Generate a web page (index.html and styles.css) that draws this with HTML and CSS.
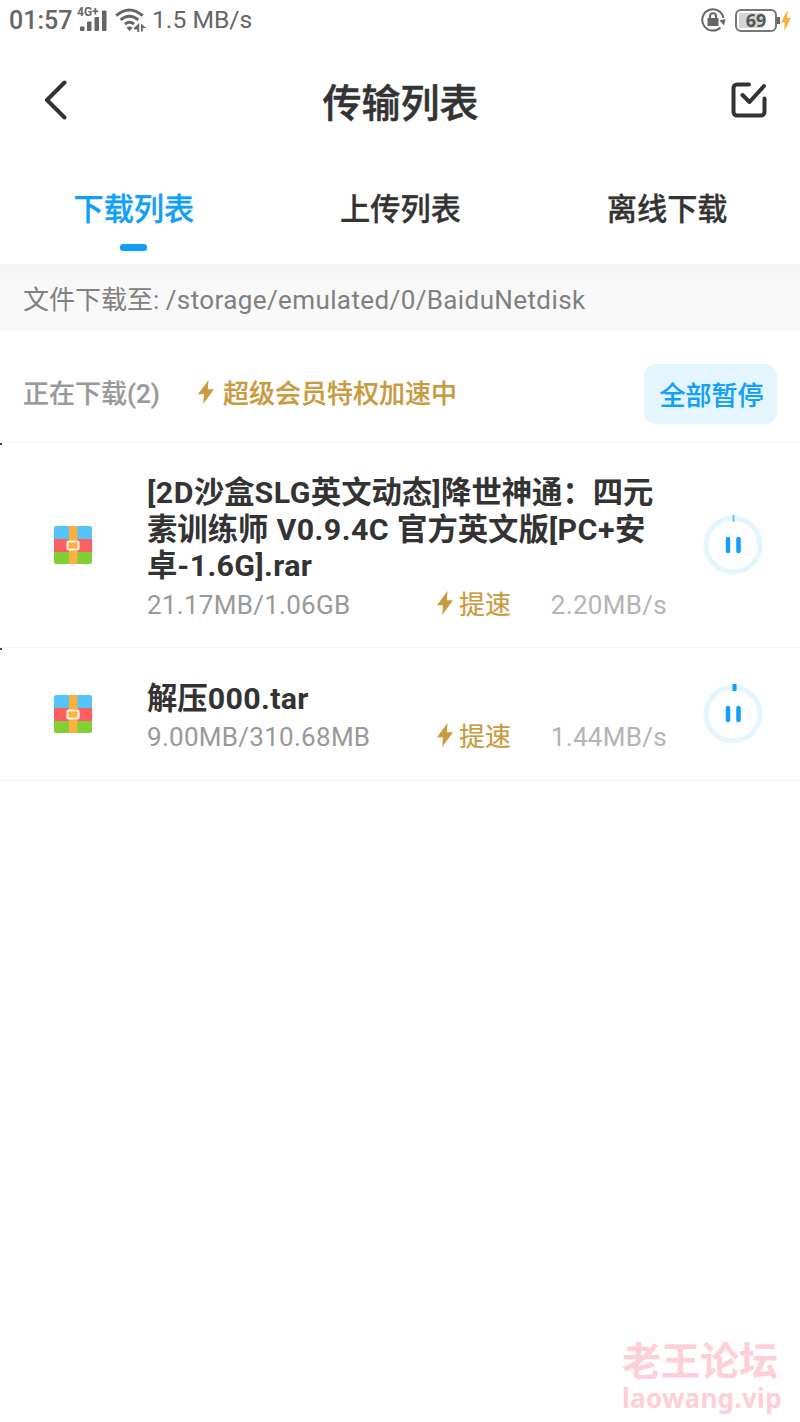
FILE: index.html
```html
<!DOCTYPE html>
<html lang="zh-CN">
<head>
<meta charset="utf-8">
<title>传输列表</title>
<link rel="stylesheet" href="styles.css">
</head>
<body>
<svg class="defs" width="0" height="0" aria-hidden="true">
  <symbol id="bolt" viewBox="0 0 16 24" preserveAspectRatio="none"><path d="M10.500 0 0 14.200h6L5.200 24 16 9.200H9.800z"/></symbol>
  <symbol id="archive" viewBox="0 0 38 38">
    <path fill="#55c5f9" d="M2 0h34a2 2 0 0 1 2 2v11H0V2a2 2 0 0 1 2-2z"/>
    <path fill="#fb5f62" d="M0 13h38v13H0z"/>
    <path fill="#81cf35" d="M0 26h38v10a2 2 0 0 1-2 2H2a2 2 0 0 1-2-2z"/>
    <path fill="#fbb041" d="M15 0h8.500v38H15z"/>
    <rect x="13.500" y="15.500" width="11" height="8" rx="1" fill="#fbb041" stroke="#fff0da" stroke-width="2.200"/>
  </symbol>
</svg>
<div class="screen">
  <header class="status">
    <span class="clock">01:57</span>
    <svg class="signal" width="30" height="28" viewBox="0 -2 30 28">
      <text x="0" y="7.500" class="network">4G+</text>
      <path fill="#666" stroke="#666" stroke-linejoin="round" d="M3.500 19H7v3.500H3.500zM10.500 14H14v8.500h-3.500zM18 9.500h3.500v13H18zM25.500 3H29v19.500h-3.500z"/>
    </svg>
    <svg class="wifi" width="32" height="26" viewBox="0 0 32 26">
      <g fill="none" stroke="#666" stroke-width="3">
        <path d="M1.200 8.700q13-11.400 26.500 0M5.600 12.900q8.800-7.400 17.700 0M10 17.100q4.500-3.600 9 0"/>
      </g>
      <path fill="#666" d="m11.500 20.700q3-2.500 6 0L14.500 24zM24.200 16v9h-1.800v-2.500H19v-1.500zm-1.800 3v2h-1.400zM26 16.500l5 4.500h-3.200v3.500H26z"/>
    </svg>
    <span class="rate">1.5 MB/s</span>
    <svg class="lock" width="26" height="26" viewBox="0 0 26 26">
      <path d="M20.500 20.500A10.700 10.700 0 1 1 23.500 11" fill="none" stroke="#666" stroke-width="2"/>
      <path fill="#666" d="m19.500 13.500 6-1.500L24 18.500zM7.500 11h11v8h-11z"/>
      <path d="M10 11.500V9.200a3 3 0 0 1 6 0v2.300" fill="none" stroke="#666" stroke-width="2"/>
    </svg>
    <span class="battery"><span class="charge">69</span></span>
    <svg class="charging" width="10" height="21"><use href="#bolt"/></svg>
  </header>

  <nav class="titlebar">
    <svg class="back" width="24" height="40" viewBox="0 0 24 40"><path d="M20.500 2.500 3 20l17.500 17.500"/></svg>
    <h1 class="title">传输列表</h1>
    <svg class="select" width="36" height="36" viewBox="0 0 36 36"><path d="M18 2.500H6A3.500 3.500 0 0 0 2.500 6v24A3.500 3.500 0 0 0 6 33.500h24a3.500 3.500 0 0 0 3.500-3.500V16.500M11.500 13l7 7L33 4"/></svg>
  </nav>

  <div class="tabs">
    <div class="tab active">下载列表</div>
    <div class="tab">上传列表</div>
    <div class="tab">离线下载</div>
  </div>

  <div class="path">文件下载至: <span class="folder">/storage/emulated/0/BaiduNetdisk</span></div>

  <div class="section">
    <span class="count">正在下载(2)</span>
    <svg class="bolt" width="16" height="24"><use href="#bolt"/></svg>
    <span class="boost">超级会员特权加速中</span>
    <button class="pause-all">全部暂停</button>
  </div>

  <div class="item first">
    <svg class="file" width="38" height="38"><use href="#archive"/></svg>
    <div class="info">
      <div class="name"><span class="latin">[2D</span>沙盒<span class="latin">SLG</span>英文动态<span class="latin">]</span>降世神通：四元<br>素训练师<span class="latin"> V0.9.4C </span>官方英文版<span class="latin">[PC+</span>安<br>卓<span class="latin">-1.6G].rar</span></div>
      <div class="meta">
        <span class="size">21.17MB/1.06GB</span>
        <svg class="bolt" width="16" height="24"><use href="#bolt"/></svg>
        <span class="faster">提速</span>
        <span class="speed">2.20MB/s</span>
      </div>
    </div>
    <svg class="ring" width="60" height="60" viewBox="0 0 60 60">
      <circle cx="30" cy="30" r="27" fill="none" stroke="#e5f5fe" stroke-width="5"/>
      <path d="M30.500 0v7" stroke="#5abdf8" stroke-width="1.800"/>
      <path d="M25 24v12M35.500 24v12" stroke="#119ffa" stroke-width="4.500" stroke-linecap="round"/>
    </svg>
  </div>

  <div class="item second">
    <svg class="file" width="38" height="38"><use href="#archive"/></svg>
    <div class="info">
      <div class="name">解压<span class="latin">000.tar</span></div>
      <div class="meta">
        <span class="size">9.00MB/310.68MB</span>
        <svg class="bolt" width="16" height="24"><use href="#bolt"/></svg>
        <span class="faster">提速</span>
        <span class="speed">1.44MB/s</span>
      </div>
    </div>
    <svg class="ring" width="60" height="60" viewBox="0 0 60 60">
      <circle cx="30" cy="30" r="27" fill="none" stroke="#e5f5fe" stroke-width="5"/>
      <path d="M31.500 0v7" stroke="#119ffa" stroke-width="4"/>
      <path d="M25 24v12M35.500 24v12" stroke="#119ffa" stroke-width="4.500" stroke-linecap="round"/>
    </svg>
  </div>

  <footer class="watermark">
    <div class="forum">老王论坛</div>
    <div class="site">laowang.vip</div>
  </footer>
</div>
</body>
</html>
```
FILE: styles.css
```css
* { box-sizing: border-box; }
body { margin: 0; background: #fefefe; font-family: Roboto, "Noto Sans CJK SC", sans-serif; color: #333; }
.defs { display: block; }
.screen { display: flex; flex-direction: column; width: 800px; height: 1422px; overflow: hidden; white-space: nowrap; }

.status { display: flex; align-items: center; height: 40px; padding: 0 9px; color: #666; }
.status svg { flex: none; }
.clock { width: 68px; padding-top: 2px; font-size: 25px; font-weight: 500; line-height: 40px; }
.network { font: bold 12px Roboto, sans-serif; fill: #666; }
.wifi { margin-left: 8px; }
.rate { margin-left: 5px; font-size: 24.700px; line-height: 40px; }
.lock { margin-left: auto; }
.battery { position: relative; width: 42px; height: 23px; margin-left: 9px; padding: 2px; border: 2px solid #777; border-radius: 6px; }
.battery::after { content: ""; position: absolute; left: 40px; top: 6px; width: 3px; height: 7px; background: #666; }
.charge { display: block; height: 15px; border-radius: 2px; background: linear-gradient(90deg, #d4d4d4 72%, #fefefe 72%); text-align: center; font-family: "Noto Sans", sans-serif; font-size: 18px; font-weight: 700; line-height: 15px; color: #555; }
.charging { margin-left: 4px; fill: #fbb03b; }

.titlebar { display: flex; align-items: center; justify-content: space-between; height: 120px; padding: 0 33px 0 44px; }
.titlebar path { fill: none; stroke: #333; stroke-width: 4; stroke-linecap: round; stroke-linejoin: round; }
.title { margin: 8px 0 0 2px; font-size: 39px; font-weight: 500; line-height: 50px; -webkit-text-stroke: 0.5px; }

.tabs { display: grid; grid-template-columns: repeat(3, 1fr); height: 104px; }
.tab { display: flex; flex-direction: column; align-items: center; padding: 29px 0 0 1px; font-size: 30.200px; font-weight: 500; line-height: 42px; -webkit-text-stroke: 0.3px; }
.active { color: #119ffa; }
.active::after { content: ""; width: 27px; height: 7px; margin-top: 13px; border-radius: 3px; background: #119ffa; }

.path { height: 67px; padding: 16px 23px; background: linear-gradient(#f4f4f4, #f8f8f8 20px, #f9f9f9); color: #808080; font-size: 26px; line-height: 40px; }
.folder { letter-spacing: 0.390px; }

.section { display: flex; align-items: center; height: 112px; padding: 0 23px; border-bottom: 1px solid #f5f5f5; font-size: 26px; line-height: 40px; }
.bolt { flex: none; fill: #c99a3e; }
.count { width: 175px; margin-top: 14px; color: #999; font-weight: 500; -webkit-text-stroke: 0.2px; }
.section .bolt { margin-top: 10px; }
.boost { margin: 14px 0 0 9px; color: #c99a3e; font-weight: 500; -webkit-text-stroke: 0.2px; }
.pause-all { width: 133px; height: 60px; margin: 14px 0 0 auto; padding: 5px 0 0 2px; border: 0; border-radius: 12px; background: #e5f5fe; color: #119ffa; font: 500 26px/40px Roboto, "Noto Sans CJK SC", sans-serif; -webkit-text-stroke: 0.2px; }

.item { position: relative; display: flex; align-items: center; padding: 0 37px 0 54px; border-bottom: 1px solid #f5f5f5; }
.item::before { content: ""; position: absolute; left: 0; top: 0; width: 2px; height: 2px; background: #444; }
.first { height: 205px; }
.second { height: 133px; }
.file { flex: none; }
.info { width: 520px; margin-left: 55px; padding-top: 10px; }
.name { font-size: 30.350px; font-weight: 700; line-height: 36.500px; }
.latin { letter-spacing: 0.450px; }
.second .latin, .name .latin:last-child { letter-spacing: 0.350px; }
.meta { display: flex; align-items: center; height: 40px; font-size: 26px; line-height: 40px; }
.size { width: 290px; color: #999; letter-spacing: 0.280px; }
.meta .bolt { margin-top: -4px; }
.faster { margin-left: 6px; color: #c99a3e; -webkit-text-stroke: 0.2px; }
.speed { width: 156px; text-align: right; color: #b4b4b4; letter-spacing: 0.300px; }
.ring { flex: none; margin-left: auto; }

.watermark { width: 160px; margin: auto 18px 7px auto; color: #ffcfd8; font-weight: 700; }
.forum { font-family: "Noto Sans CJK SC", sans-serif; font-size: 39px; line-height: 46px; }
.site { font-family: "Noto Sans", sans-serif; font-size: 26px; line-height: 34px; letter-spacing: 0.300px; }
```
